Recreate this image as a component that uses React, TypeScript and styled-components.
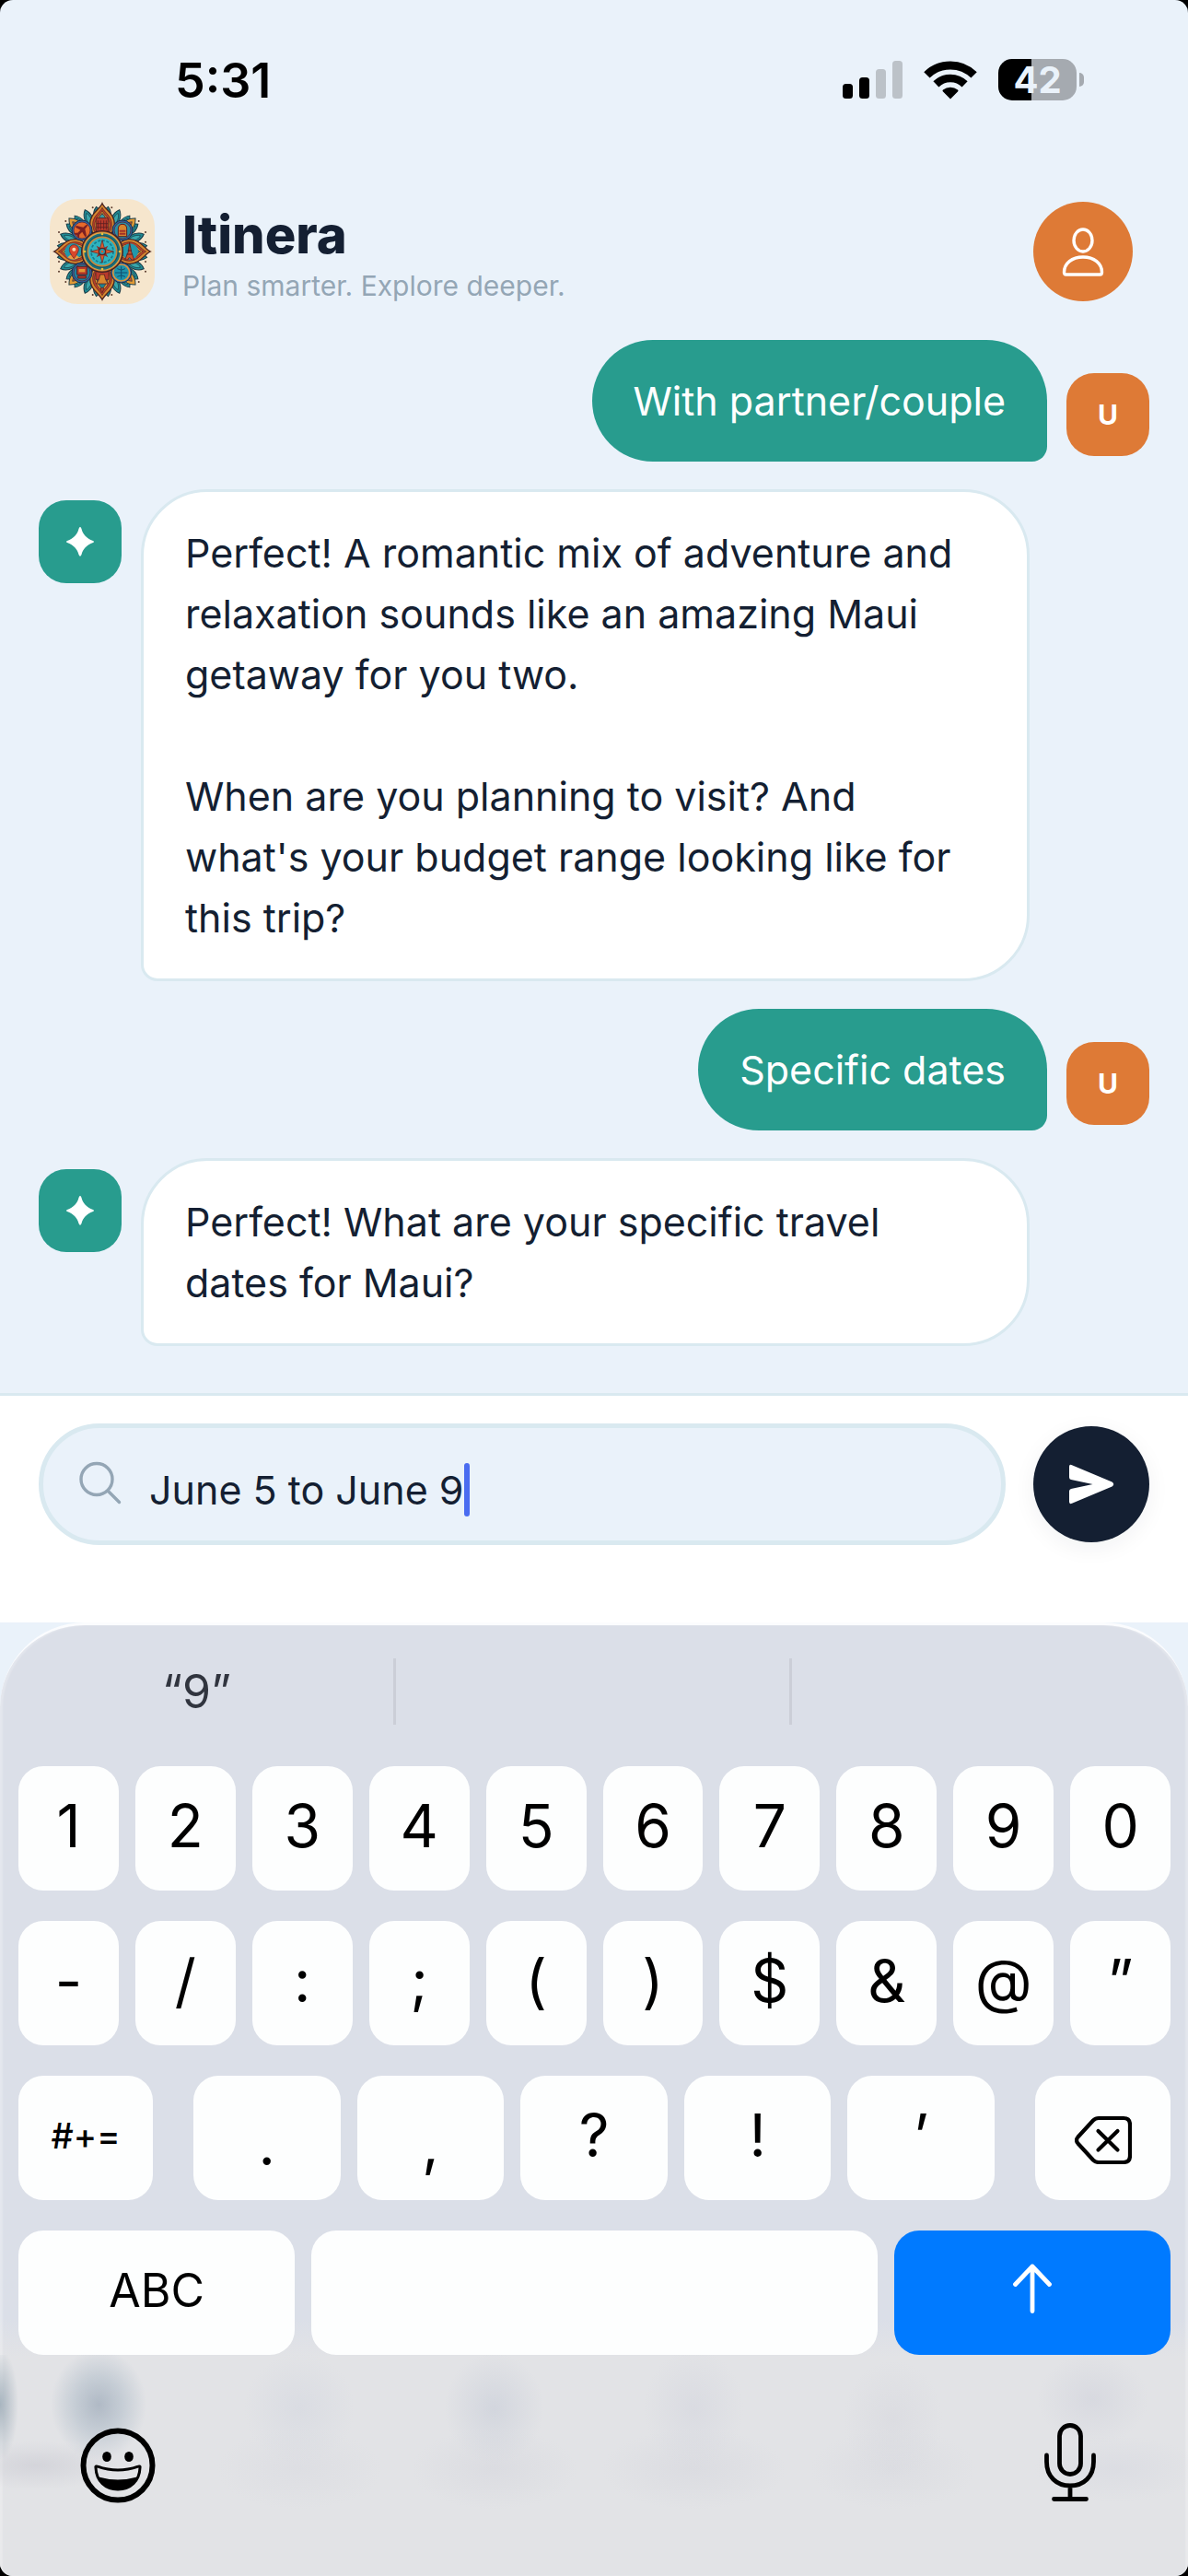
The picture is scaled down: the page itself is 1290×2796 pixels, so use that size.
import React, { useState } from "react";
import styled, { createGlobalStyle } from "styled-components";

const GlobalStyle = createGlobalStyle`
  *, *::before, *::after { box-sizing: border-box; }
  html { background: #000; }
  body { margin: 0; font-family: Inter, Roboto, "Liberation Sans", sans-serif; -webkit-font-smoothing: antialiased; }
  button { font: inherit; color: inherit; border: 0; padding: 0; background: none; cursor: pointer; }
  svg { display: block; flex: none; }
`;

const colors = {
  page: "#eaf2fa",
  ink: "#141f32",
  muted: "#94a6b5",
  teal: "#289c8e",
  orange: "#de7a36",
  line: "#d9e9f0",
};

const Screen = styled.div`
  min-height: 100vh;
  display: flex;
  flex-direction: column;
  background: ${colors.page};
  border-radius: 14px;
  overflow: hidden;
`;

/* ---------- status bar ---------- */

const StatusBar = styled.div`
  display: flex;
  align-items: center;
  justify-content: space-between;
  padding: 62px 113px 0 190px;
`;

const Clock = styled.time`
  font-size: 52px;
  line-height: 52px;
  font-weight: 600;
  color: #000;
`;

const StatusIcons = styled.div`
  display: flex;
  align-items: center;
  gap: 23px;
  padding-bottom: 3px;
`;

const Battery = styled.div`
  display: flex;
  align-items: center;
  gap: 3px;
`;

const BatteryBody = styled.div<{ $level: number }>`
  width: 85px;
  height: 45px;
  border-radius: 15px;
  display: flex;
  align-items: center;
  justify-content: center;
  background: linear-gradient(90deg, #000 ${(p) => p.$level}%, #a5aab0 ${(p) => p.$level}%);
  color: ${colors.page};
  font-size: 40px;
  line-height: 45px;
  font-weight: 700;
`;

const BatteryCap = styled.div`
  width: 5px;
  height: 15px;
  border-radius: 0 5px 5px 0;
  background: #a5aab0;
`;

/* ---------- header ---------- */

const Header = styled.header`
  display: flex;
  align-items: center;
  gap: 30px;
  padding: 102px 60px 39px 54px;
`;

const Brand = styled.div`
  flex: 1;
  padding-top: 2px;
`;

const Title = styled.h1`
  margin: 0;
  font-size: 56px;
  line-height: 72px;
  font-weight: 800;
  color: ${colors.ink};
`;

const Tagline = styled.p`
  margin: 0;
  font-size: 30px;
  line-height: 38px;
  color: ${colors.muted};
`;

const ProfileButton = styled.button`
  width: 108px;
  height: 108px;
  border-radius: 50%;
  background: ${colors.orange};
  display: grid;
  place-items: center;
`;

/* ---------- conversation ---------- */

const Conversation = styled.main`
  flex: 1;
  display: flex;
  flex-direction: column;
  gap: 30px;
  padding: 0 42px 51px;
`;

const MessageRow = styled.div<{ $mine?: boolean }>`
  display: flex;
  gap: 21px;
  justify-content: ${(p) => (p.$mine ? "flex-end" : "flex-start")};
  align-items: ${(p) => (p.$mine ? "flex-end" : "flex-start")};
`;

const Avatar = styled.div<{ $mine?: boolean }>`
  flex: none;
  width: 90px;
  height: 90px;
  margin: ${(p) => (p.$mine ? "0 0 6px" : "12px 0 0")};
  border-radius: 30px;
  background: ${(p) => (p.$mine ? colors.orange : colors.teal)};
  color: #fff;
  display: grid;
  place-items: center;
  font-size: 30px;
  font-weight: 700;
`;

const Bubble = styled.p<{ $mine?: boolean }>`
  margin: 0;
  max-width: 80%;
  padding: 33px 45px;
  white-space: pre-line;
  font-size: 43px;
  line-height: 66px;
  color: ${(p) => (p.$mine ? "#fff" : colors.ink)};
  background: ${(p) => (p.$mine ? colors.teal : "#fff")};
  border: ${(p) => (p.$mine ? "0" : `3px solid ${colors.line}`)};
  border-radius: ${(p) => (p.$mine ? "72px 72px 18px 72px" : "72px 72px 72px 18px")};
`;

/* ---------- composer ---------- */

const Composer = styled.form`
  display: flex;
  align-items: center;
  gap: 30px;
  padding: 30px 42px 84px;
  background: #fff;
  border-top: 3px solid ${colors.line};
`;

const Field = styled.label`
  flex: 1;
  min-width: 0;
  height: 132px;
  display: flex;
  align-items: center;
  gap: 30px;
  padding: 0 39px;
  border: 5px solid ${colors.line};
  border-radius: 66px;
  background: ${colors.page};
`;

const Entry = styled.span`
  display: flex;
  align-items: center;
  min-width: 0;
  padding-top: 12px;
`;

const TextInput = styled.input`
  field-sizing: content;
  min-width: 3px;
  max-width: 100%;
  padding: 0;
  border: 0;
  outline: 0;
  background: none;
  font: inherit;
  font-size: 43px;
  line-height: 57px;
  color: ${colors.ink};
`;

const Caret = styled.span`
  width: 6px;
  height: 58px;
  border-radius: 3px;
  background: #4a6cf0;
`;

const SendButton = styled.button`
  flex: none;
  width: 126px;
  height: 126px;
  border-radius: 50%;
  background: ${colors.ink};
  display: grid;
  place-items: center;
  box-shadow: 0 6px 24px rgba(20, 31, 50, 0.06);
`;

/* ---------- keyboard ---------- */

const Keyboard = styled.section`
  border-top: 3px solid #fbfcfe;
  border-radius: 92px 92px 0 0;
  box-shadow: inset 3px 0 2px rgba(255, 255, 255, 0.25), inset -3px 0 2px rgba(255, 255, 255, 0.25);
  background: linear-gradient(180deg, #dbdfe8 0%, #dbdfe8 73%, #e2e3e6 77%, #e2e3e6 100%);
  color: #000;
`;

const Suggestions = styled.div`
  display: grid;
  grid-template-columns: repeat(3, 1fr);
  padding: 36px 0 45px;
`;

const Suggestion = styled.button`
  height: 72px;
  font-size: 50px;
  line-height: 72px;
  color: #31353f;
  border-right: 3px solid #cbced7;
  &:last-child { border-right: 0; }
`;

const KeyRows = styled.div`
  display: flex;
  flex-direction: column;
  gap: 33px;
  padding: 0 19px 0 20px;
`;

const KeyRow = styled.div`
  display: flex;
  gap: 18px;
`;

const KeyGroup = styled.div`
  flex: 1;
  display: flex;
  gap: 18px;
  padding: 0 26px;
`;

const Key = styled.button<{ $width?: string; $size?: number; $weight?: number; $primary?: boolean; $low?: boolean }>`
  flex: ${(p) => (p.$width ? `0 0 ${p.$width}` : "1 1 0")};
  min-width: 0;
  height: 135px;
  border-radius: 27px;
  display: grid;
  place-items: center;
  padding: ${(p) => (p.$low ? "12px 0 0" : "0 0 6px")};
  background: ${(p) => (p.$primary ? "#007aff" : "#fdfefe")};
  color: ${(p) => (p.$primary ? "#fff" : "#000")};
  font-size: ${(p) => p.$size ?? 64}px;
  font-weight: ${(p) => p.$weight ?? 400};
  line-height: 72px;
`;

const KeyboardFooter = styled.div`
  display: flex;
  justify-content: space-between;
  padding: 72px 80px;
  background:
    radial-gradient(ellipse 52px 60px at 8.3% 54px, rgba(150, 164, 180, 0.66), rgba(165, 180, 194, 0.46) 50%, transparent),
    radial-gradient(ellipse 20px 60px at 0% 54px, rgba(140, 158, 172, 0.7), transparent),
    radial-gradient(ellipse 90px 26px at 3% 120px, rgba(190, 190, 200, 0.4), transparent),
    radial-gradient(ellipse 60px 60px at 25.2% 58px, rgba(208, 212, 222, 0.45), transparent),
    radial-gradient(ellipse 90px 44px at 25.2% 124px, rgba(214, 215, 222, 0.4), transparent),
    radial-gradient(ellipse 54px 60px at 41.6% 58px, rgba(200, 205, 216, 0.6), transparent),
    radial-gradient(ellipse 90px 44px at 41.6% 124px, rgba(212, 213, 220, 0.5), transparent),
    radial-gradient(ellipse 54px 64px at 58.4% 58px, rgba(208, 210, 220, 0.45), transparent),
    radial-gradient(ellipse 100px 44px at 58.4% 124px, rgba(212, 213, 220, 0.5), transparent),
    radial-gradient(ellipse 54px 64px at 75.2% 70px, rgba(212, 213, 220, 0.45), transparent),
    radial-gradient(ellipse 90px 44px at 75.2% 124px, rgba(212, 213, 220, 0.4), transparent),
    radial-gradient(ellipse 60px 50px at 92% 48px, rgba(206, 208, 218, 0.5), transparent),
    radial-gradient(ellipse 90px 36px at 94% 124px, rgba(210, 212, 222, 0.4), transparent);
`;

const IconButton = styled.button`
  width: 96px;
  height: 96px;
  display: grid;
  place-items: center;
`;

/* ---------- drawings ---------- */

const SignalIcon = () => (
  <svg width="65" height="41" viewBox="0 0 65 41" aria-label="Signal">
    <rect x="0" y="25" width="11" height="16" rx="3.5" />
    <rect x="18" y="18" width="11" height="23" rx="3.5" />
    <rect x="36" y="9" width="11" height="32" rx="3.5" fill="#bcc2c8" />
    <rect x="54" y="0" width="11" height="41" rx="3.5" fill="#bcc2c8" />
  </svg>
);

const WifiIcon = () => (
  <svg width="58" height="42" viewBox="0 0 58 42" aria-label="Wi-Fi">
    <g fill="none" stroke="#000">
      <path d="M3.4 15.4A36.5 36.5 0 0 1 54.6 15.4" strokeWidth="9" />
      <path d="M13.4 25.4A22.2 22.2 0 0 1 44.6 25.4" strokeWidth="8.6" />
    </g>
    <path d="M29 41.5 20.8 33.2Q20 32.3 21 31.5A12.6 12.6 0 0 1 37 31.5Q38 32.3 37.2 33.2Z" />
  </svg>
);

const quarter = [0, 90, 180, 270];
const petalAngles = Array.from({ length: 24 }, (_, i) => i * 15 + 7.5);

const MandalaLogo = () => (
  <svg width="114" height="114" viewBox="0 0 342 342" aria-label="Itinera logo">
    <rect width="342" height="342" rx="90" fill="#f6e6cd" />
    <g stroke="#1b3d49" strokeWidth="3">
      {petalAngles.map((a) => (
        <path key={a} transform={`rotate(${a} 171 171)`} d="M171 24C187 40 190 64 171 100C152 64 155 40 171 24Z" fill="#1f8a93" />
      ))}
      {petalAngles.map((a) => (
        <path key={a} transform={`rotate(${a} 171 171)`} d="M171 36C180 48 181 64 171 84C161 64 162 48 171 36Z" fill="#3aa6ab" strokeWidth="2" />
      ))}
      {[45, 135, 225, 315].map((a) => (
        <g key={a} transform={`rotate(${a} 171 171)`}>
          <path d="M171 18C192 38 194 64 171 90C148 64 150 38 171 18Z" fill="#e39a35" />
          <path d="M171 34C182 48 183 62 171 80C159 62 160 48 171 34Z" fill="#c9522a" strokeWidth="2" />
        </g>
      ))}
    </g>
    {quarter.map((a) => (
      <g key={a} transform={`rotate(${a} 171 171)`} stroke="#4a2320">
        <path d="M171 14C180 34 212 48 211 84C210 110 194 122 171 128C148 122 132 110 131 84C130 48 162 34 171 14Z" fill="#d9862f" strokeWidth="4" />
        <path d="M171 28C178 44 203 56 202 84C201 106 190 116 171 122C152 116 141 106 140 84C139 56 164 44 171 28Z" fill="#b8402a" strokeWidth="2" />
        <path d="M171 38C177 52 196 62 195 86C194 104 186 112 171 118C156 112 148 104 147 86C146 62 165 52 171 38Z" fill="#e39a35" strokeWidth="2" />
        <path d="M171 46C176 58 190 68 189 88C188 102 182 108 171 112C160 108 154 102 153 88C152 68 166 58 171 46Z" fill="#21808e" strokeWidth="2" />
      </g>
    ))}
    <g stroke="#5b1f22" strokeWidth="2.5">
      <path d="M152 62H190V106H152Z" fill="#b93a2b" />
      <path d="M160 62Q171 36 182 62Z" fill="#3a9aa0" />
      <path d="M158 70V100M166 70V100M176 70V100M184 70V100M152 80H190M152 92H190" fill="none" />
      <path d="M150 236H192V262H150Z" fill="#b93a2b" />
      <path d="M160 262L164 246H178L182 262L190 276H152Z" fill="#d9862f" />
      <path d="M166 290H176L172 304H169Z" fill="#c9522a" />
    </g>
    <circle cx="76" cy="171" r="27" fill="#2398aa" />
    <path d="M58 190Q76 170 96 190Q78 204 58 190Z" fill="#f09a40" />
    <path d="M79 194Q62 172 64 164A15 15 0 0 1 94 164Q95 172 79 194Z" fill="#d8472b" stroke="#5b1f22" strokeWidth="2" />
    <circle cx="79" cy="164" r="6" fill="#f6d9b0" />
    <circle cx="262" cy="171" r="26" fill="#2398aa" />
    <path d="M260 142L266 172L275 198H266Q260 184 254 198H245L256 172Z" fill="#c9522a" stroke="#5b1f22" strokeWidth="2.5" />
    <path d="M250 180H270M254 168H267" stroke="#5b1f22" strokeWidth="3" />
    {[
      [105, 102, "#e5692b"],
      [237, 102, "#2a8fa3"],
      [105, 240, "#1f7f9c"],
      [233, 240, "#1d93ab"],
    ].map(([x, y, fill], i) => (
      <g key={i}>
        <circle cx={x} cy={y} r="33" fill="#2c63a0" stroke="#1d2f4a" strokeWidth="3" />
        <circle cx={x} cy={y} r="27" fill={fill as string} stroke={i === 3 ? "#e0953c" : "#5a2a3a"} strokeWidth={i === 3 ? 5 : 2.5} />
      </g>
    ))}
    <path transform="rotate(45 105 102)" d="M105 76Q109 78 109 92L128 104V110L109 105V118L115 124V128L105 125L95 128V124L101 118V105L82 110V104L101 92Q101 78 105 76Z" fill="#7c1f22" />
    <path d="M223 98Q223 82 237 82Q251 82 251 98V122H223Z" fill="#d9862f" stroke="#5b1f22" strokeWidth="3" />
    <path d="M227 104H247M227 113H247" stroke="#a3302a" strokeWidth="6" />
    <path d="M89 220H121V246H89ZM92 250H118V258H92Z" fill="#b93a2b" stroke="#5b1f22" strokeWidth="3" />
    <path d="M95 228H115V238H95Z" fill="#e39a35" />
    <path d="M233 220V260M213 240H253M220 227Q233 236 246 227M220 253Q233 244 246 253" fill="none" stroke="#124d6e" strokeWidth="3" />
    <circle cx="171" cy="171" r="67" fill="#b8642c" stroke="#3a2226" strokeWidth="4" />
    <circle cx="171" cy="171" r="61" fill="#1c6f7c" stroke="#e0a548" strokeWidth="4" />
    <circle cx="171" cy="171" r="47" fill="#2fb3bf" stroke="#c98638" strokeWidth="5" />
    <circle cx="171" cy="171" r="52" fill="none" stroke="#123f4d" strokeWidth="2" />
    <circle cx="171" cy="171" r="36" fill="none" stroke="#147a8c" strokeWidth="5" strokeDasharray="9 5" />
    {quarter.map((a) => (
      <g key={a} transform={`rotate(${a} 171 171)`}>
        <circle cx="171" cy="114" r="4" fill="#e8c23c" />
        <path transform="rotate(45 171 171)" d="M171 144L179 171H163Z" fill="#8c2b28" />
      </g>
    ))}
    {quarter.map((a) => (
      <path key={a} transform={`rotate(${a} 171 171)`} d="M171 134L181 171H161Z" fill="#dc5a2d" stroke="#5b1f22" strokeWidth="2" />
    ))}
    <circle cx="171" cy="171" r="11" fill="#2398aa" stroke="#5b1f22" strokeWidth="4" />
    <circle cx="171" cy="171" r="4" fill="#dc5a2d" />
    <g fill="#5a3a2c">
      {[
        [140, 28], [202, 28], [52, 72], [290, 72], [52, 270], [290, 270], [140, 312], [202, 312],
        [30, 108], [312, 108], [30, 236], [312, 236], [30, 140], [312, 140], [30, 204], [312, 204],
      ].map(([x, y]) => (
        <circle key={`${x}-${y}`} cx={x} cy={y} r="3" />
      ))}
    </g>
  </svg>
);

const PersonIcon = () => (
  <svg width="46" height="60" viewBox="0 0 46 60" fill="none" stroke="#fff" strokeWidth="3.400" strokeLinejoin="round">
    <ellipse cx="23" cy="18" rx="10" ry="12" />
    <path d="M4.500 55Q2.500 55 2.500 52.500C2.500 43 11 36 23 36S43.500 43 43.500 52.500Q43.500 55 41.500 55Z" />
  </svg>
);

const SparkIcon = () => (
  <svg width="32" height="32" viewBox="0 0 32 32" fill="#fff">
    <path d="M16 0Q17 0 17.500 2C19 8 23 12.500 30 15Q32 16 30 17C23 19.500 19 24 17.500 30Q16 33.500 14.500 30C13 24 9 19.500 2 17Q0 16 2 15C9 12.500 13 8 14.500 2Q15 0 16 0Z" />
  </svg>
);

const SearchIcon = () => (
  <svg width="46" height="50" viewBox="0 0 46 50" fill="none" stroke="#94a6b5" strokeWidth="3.400" strokeLinecap="round">
    <circle cx="19" cy="19.500" r="17" />
    <path d="M31.500 32.500 43.500 44.500" />
  </svg>
);

const SendIcon = () => (
  <svg width="50" height="44" viewBox="0 0 50 44" fill="#fff">
    <path d="M1 3Q1 0 4 1.200L47.500 19.500Q51 22 47.500 24.500L4 42.800Q1 44 1 41V29.500Q1 27.500 3 27L26.500 22 3 17Q1 16.500 1 14.500Z" />
  </svg>
);

const BackspaceIcon = () => (
  <svg width="62" height="62" viewBox="0 -10 62 62" fill="none" stroke="#000" strokeWidth="4.200" strokeLinecap="round" strokeLinejoin="round">
    <path d="M26 2H53Q60 2 60 9V43Q60 50 53 50H26Q22.500 50 20 47.500L3.500 29.500Q0.500 26 3.500 22.500L20 4.500Q22.500 2 26 2Z" />
    <path d="M25.500 16 46.500 36.500M46.500 16 25.500 36.500" />
  </svg>
);

const ArrowUpIcon = () => (
  <svg width="44" height="58" viewBox="0 0 44 58" fill="none" stroke="#fff" strokeWidth="4.800" strokeLinecap="round" strokeLinejoin="round">
    <path d="M22 51.500V3M3.500 22.500 22 3 40.500 22.500" />
  </svg>
);

const EmojiIcon = () => (
  <svg width="82" height="82" viewBox="0 0 82 82">
    <circle cx="41" cy="41" r="37.500" fill="none" stroke="#000" strokeWidth="6" />
    <ellipse cx="29" cy="31.500" rx="4.800" ry="5.600" />
    <ellipse cx="53" cy="31.500" rx="4.800" ry="5.600" />
    <path d="M17 43.500C16.500 41.500 18 41.800 19 42.200Q41 50 63 42.200C64 41.800 65.500 41.500 65 43.500C64.500 58 54.500 67 41 67S17.500 58 17 43.500Z" fill="none" stroke="#000" strokeWidth="3" />
    <path d="M20 53.500Q41 59.500 62 53.500Q56 67.500 41 67.500T20 53.500Z" />
  </svg>
);

const MicIcon = () => (
  <svg width="58" height="92" viewBox="0 0 58 92" fill="none" stroke="#000" strokeWidth="4.800" strokeLinecap="round">
    <rect x="17.500" y="2.500" width="23" height="53" rx="11.500" />
    <path d="M3.500 35V42C3.500 58 14 68 29 68S54.500 58 54.500 42V35M29 68V82M11.500 82.500H46.500" />
  </svg>
);

/* ---------- content ---------- */

const messages = [
  { mine: true, text: "With partner/couple" },
  {
    mine: false,
    text: "Perfect! A romantic mix of adventure and relaxation sounds like an amazing Maui getaway for you two.\n\nWhen are you planning to visit? And what's your budget range looking like for this trip?",
  },
  { mine: true, text: "Specific dates" },
  { mine: false, text: "Perfect! What are your specific travel dates for Maui?" },
];

const digitKeys = ["1", "2", "3", "4", "5", "6", "7", "8", "9", "0"];
const symbolKeys = ["-", "/", ":", ";", "(", ")", "$", "&", "@", "”"];
const punctuationKeys = [".", ",", "?", "!", "’"];

export default function App() {
  const [draft, setDraft] = useState("June 5 to June 9");
  const type = (character: string) => setDraft((value) => value + character);

  return (
    <>
      <GlobalStyle />
      <Screen>
        <StatusBar>
          <Clock>5:31</Clock>
          <StatusIcons>
            <SignalIcon />
            <WifiIcon />
            <Battery>
              <BatteryBody $level={42}>42</BatteryBody>
              <BatteryCap />
            </Battery>
          </StatusIcons>
        </StatusBar>

        <Header>
          <MandalaLogo />
          <Brand>
            <Title>Itinera</Title>
            <Tagline>Plan smarter. Explore deeper.</Tagline>
          </Brand>
          <ProfileButton type="button" aria-label="Profile">
            <PersonIcon />
          </ProfileButton>
        </Header>

        <Conversation>
          {messages.map(({ mine, text }) => (
            <MessageRow key={text} $mine={mine}>
              {!mine && (
                <Avatar>
                  <SparkIcon />
                </Avatar>
              )}
              <Bubble $mine={mine}>{text}</Bubble>
              {mine && <Avatar $mine>U</Avatar>}
            </MessageRow>
          ))}
        </Conversation>

        <Composer onSubmit={(event) => event.preventDefault()}>
          <Field>
            <SearchIcon />
            <Entry>
              <TextInput aria-label="Message" value={draft} onChange={(event) => setDraft(event.target.value)} />
              <Caret />
            </Entry>
          </Field>
          <SendButton type="submit" aria-label="Send">
            <SendIcon />
          </SendButton>
        </Composer>

        <Keyboard aria-label="Keyboard">
          <Suggestions>
            <Suggestion type="button">“9”</Suggestion>
            <Suggestion type="button" aria-label="Second suggestion" />
            <Suggestion type="button" aria-label="Third suggestion" />
          </Suggestions>
          <KeyRows>
            <KeyRow>
              {digitKeys.map((key) => (
                <Key key={key} type="button" onClick={() => type(key)}>
                  {key}
                </Key>
              ))}
            </KeyRow>
            <KeyRow>
              {symbolKeys.map((key) => (
                <Key key={key} type="button" onClick={() => type(key)}>
                  {key}
                </Key>
              ))}
            </KeyRow>
            <KeyRow>
              <Key type="button" $width="146px" $size={38} $weight={500}>
                #+=
              </Key>
              <KeyGroup>
                {punctuationKeys.map((key) => (
                  <Key key={key} type="button" $low={key === "." || key === ","} onClick={() => type(key)}>
                    {key}
                  </Key>
                ))}
              </KeyGroup>
              <Key type="button" $width="147px" aria-label="Delete" onClick={() => setDraft((value) => value.slice(0, -1))}>
                <BackspaceIcon />
              </Key>
            </KeyRow>
            <KeyRow>
              <Key type="button" $width="24%" $size={50}>
                ABC
              </Key>
              <Key type="button" aria-label="Space" onClick={() => type(" ")} />
              <Key type="button" $width="24%" $primary aria-label="Return">
                <ArrowUpIcon />
              </Key>
            </KeyRow>
          </KeyRows>
          <KeyboardFooter>
            <IconButton type="button" aria-label="Emoji">
              <EmojiIcon />
            </IconButton>
            <IconButton type="button" aria-label="Dictate">
              <MicIcon />
            </IconButton>
          </KeyboardFooter>
        </Keyboard>
      </Screen>
    </>
  );
}
